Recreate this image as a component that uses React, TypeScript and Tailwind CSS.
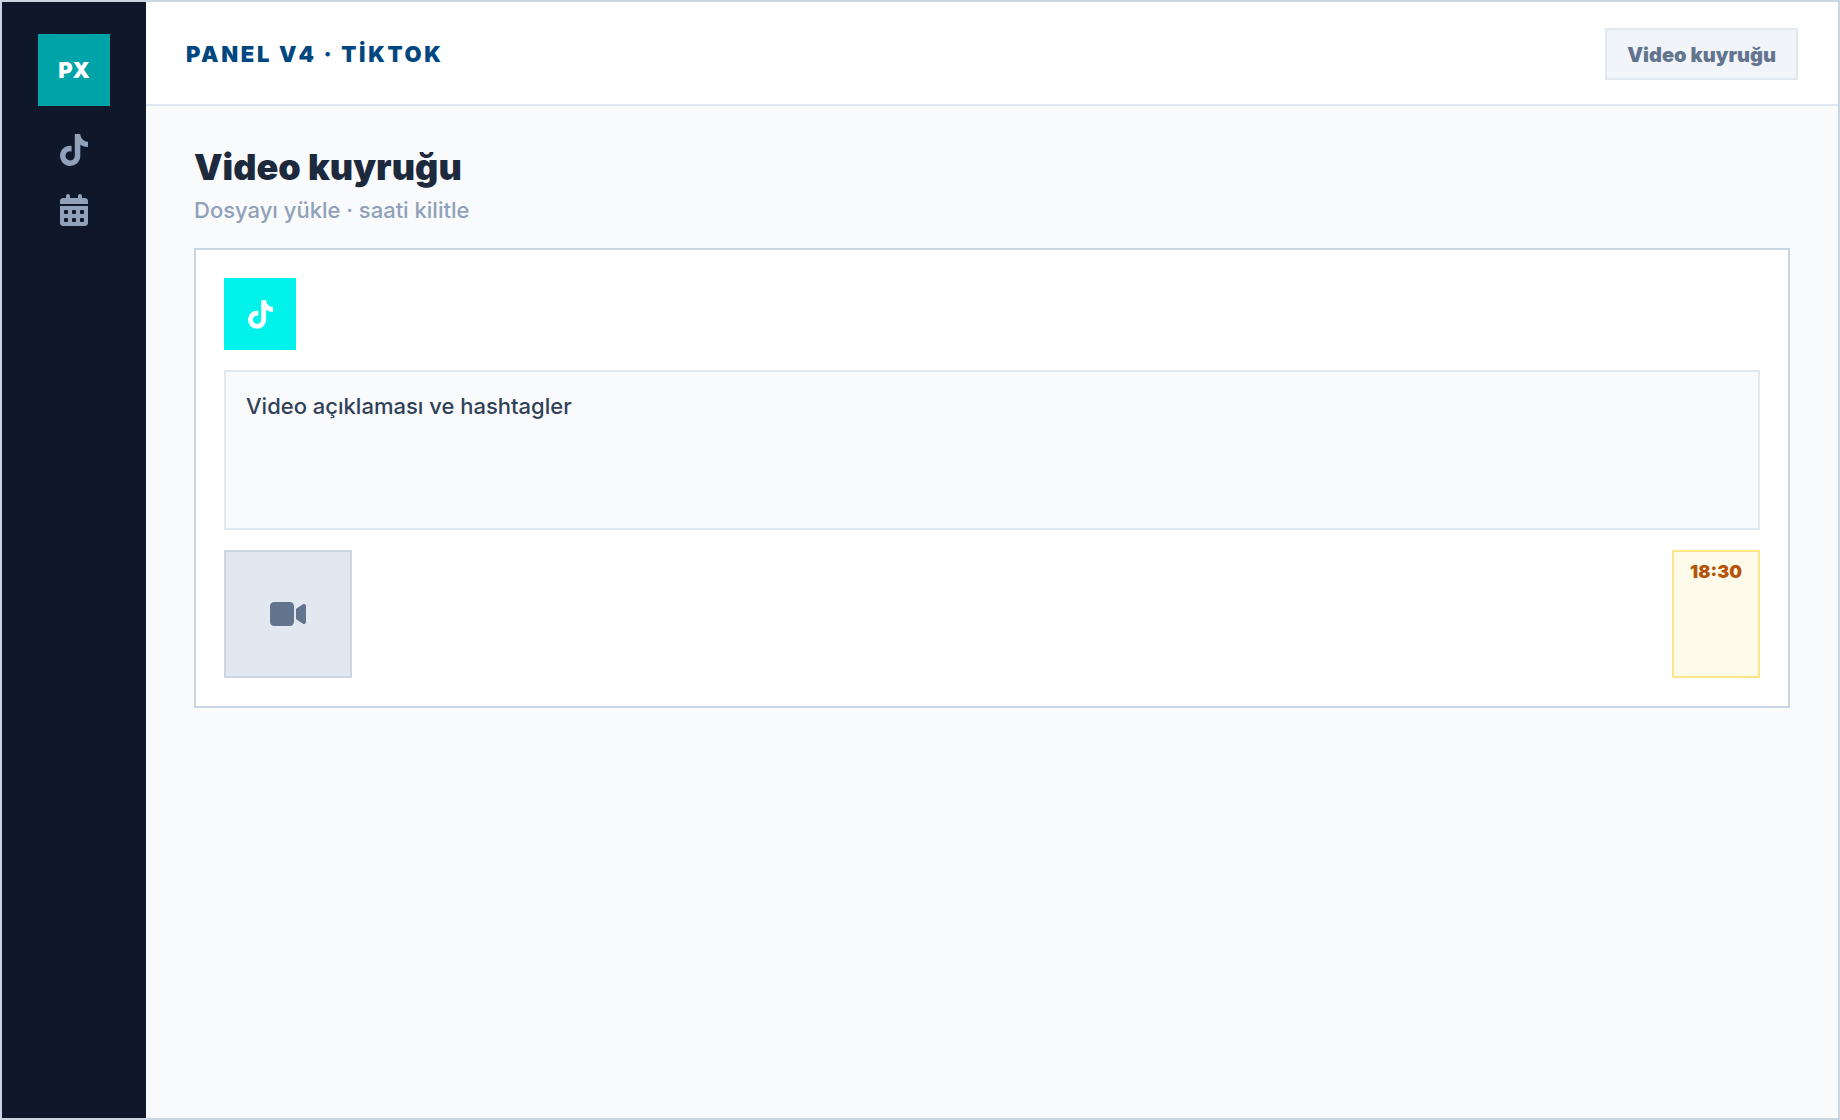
import { useState } from 'react'
import { FaCalendarDays, FaTiktok, FaVideo } from 'react-icons/fa6'

const navItems = [
  { label: 'TikTok', href: '#tiktok', icon: FaTiktok },
  { label: 'Takvim', href: '#takvim', icon: FaCalendarDays },
]

function Sidebar() {
  return (
    <aside className="flex w-36 shrink-0 flex-col items-center gap-7 bg-slate-900 pt-8">
      <div className="flex size-[72px] items-center justify-center bg-[#00a3a8] text-[22px] font-black text-white">
        PX
      </div>
      <nav aria-label="Ana menü" className="flex flex-col gap-7">
        {navItems.map(({ label, href, icon: Icon }) => (
          <a key={href} href={href} aria-label={label} className="flex h-8 justify-center text-slate-400">
            <Icon className="h-8 w-7" aria-hidden="true" />
          </a>
        ))}
      </nav>
    </aside>
  )
}

function Composer() {
  const [caption, setCaption] = useState('Video açıklaması ve hashtagler')

  return (
    <section className="flex flex-col gap-5 border-2 border-slate-300 bg-white p-7">
      <button
        type="button"
        aria-label="TikTok"
        className="flex size-[72px] items-center justify-center bg-[#00f2ea] text-white"
      >
        <FaTiktok className="h-[29px] w-[25px]" aria-hidden="true" />
      </button>

      <textarea
        aria-label="Video açıklaması"
        value={caption}
        onChange={(e) => setCaption(e.target.value)}
        className="block h-40 w-full resize-none border-2 border-slate-200 bg-slate-50 px-5 py-4 text-[22px] leading-9 font-medium text-slate-700 outline-none"
      />

      <div className="flex justify-between">
        <button
          type="button"
          aria-label="Video ekle"
          className="flex size-32 items-center justify-center border-2 border-slate-300 bg-slate-200 text-slate-500"
        >
          <FaVideo className="h-8 w-9" aria-hidden="true" />
        </button>
        <time className="border-2 border-[#fde68a] bg-[#fffbeb] px-4 py-2 text-lg leading-6 font-black text-[#b45309]">
          18:30
        </time>
      </div>
    </section>
  )
}

export default function App() {
  return (
    <div className="flex min-h-screen border-2 border-slate-300 bg-slate-50 font-['Inter',sans-serif]">
      <Sidebar />
      <div className="flex min-w-0 flex-1 flex-col">
        <header className="flex items-center justify-between border-b-2 border-slate-200 bg-white px-10 pt-[26px] pb-6">
          <p className="text-[22px] leading-8 font-black tracking-[0.12em] text-[#00467f]">PANEL V4 · TİKTOK</p>
          <span className="border-2 border-slate-200 bg-slate-100 px-5 pt-[9px] pb-[7px] text-xl leading-8 font-black text-slate-500">
            Video kuyruğu
          </span>
        </header>

        <main className="px-12 pt-10">
          <h1 className="text-4xl leading-[42px] font-black text-slate-800">Video kuyruğu</h1>
          <p className="mt-1.5 mb-[22px] text-[22px] leading-8 font-medium text-slate-400">
            Dosyayı yükle · saati kilitle
          </p>
          <Composer />
        </main>
      </div>
    </div>
  )
}
